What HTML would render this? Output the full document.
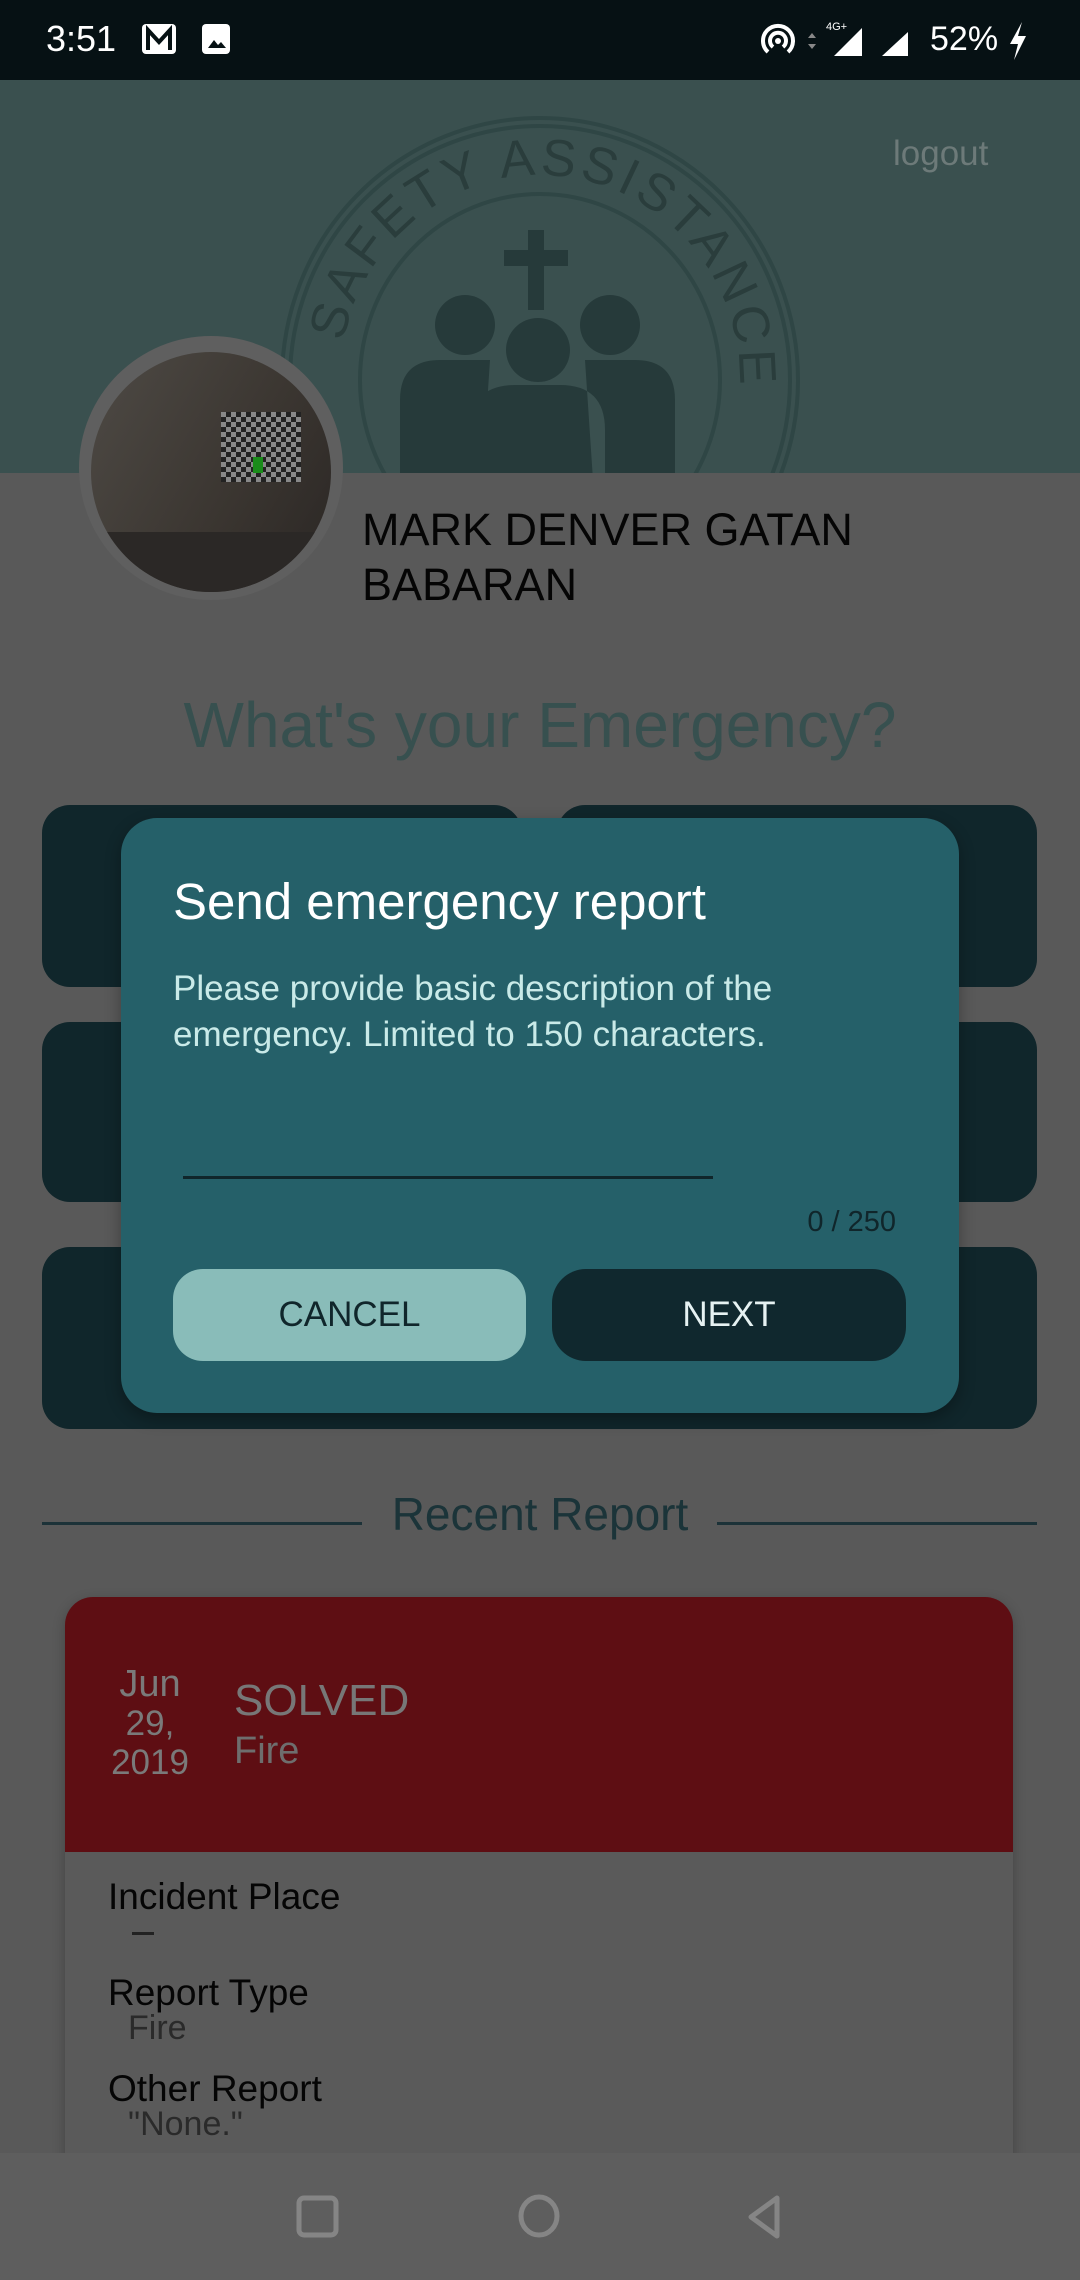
<!DOCTYPE html>
<html><head><meta charset="utf-8"><style>
*{margin:0;padding:0;box-sizing:border-box}
body{width:1080px;height:2280px;position:relative;overflow:hidden;background:#595959;font-family:"Liberation Sans",sans-serif}
.a{position:absolute;white-space:nowrap}
.card{position:absolute;background:#10262b;border-radius:28px}
</style></head><body>
<div class="a" style="left:0;top:0;width:1080px;height:80px;background:#061114"></div>
<div class="a" style="left:46px;top:18px;font-size:36px;color:#fff">3:51</div>
<svg class="a" style="left:140px;top:22px" width="40" height="36" viewBox="0 0 40 36"><rect x="2" y="2" width="34" height="30" rx="4" fill="#fff"/><path d="M8 28V8l11 12 11-12v20" stroke="#061114" stroke-width="4" fill="none"/></svg>
<svg class="a" style="left:200px;top:22px" width="34" height="34" viewBox="0 0 34 34"><rect x="2" y="2" width="28" height="30" rx="4" fill="#fff"/><path d="M8 26l6-8 4 5 3-3 5 6z" fill="#061114"/></svg>
<svg class="a" style="left:758px;top:20px" width="200" height="42" viewBox="0 0 200 42"><path d="M10 32a15 15 0 1 1 20 0" stroke="#fff" stroke-width="4" fill="none"/><path d="M15 27a8 8 0 1 1 10 0" stroke="#fff" stroke-width="4" fill="none"/><circle cx="20" cy="21" r="3" fill="#fff"/><path d="M50 18l4-5 4 5zM50 24l4 5 4-5z" fill="#888"/><path d="M104 36V8L76 36z" fill="#fff"/><text x="68" y="10" font-size="11" fill="#fff" font-family="Liberation Sans">4G+</text><path d="M150 36V12L124 36z" fill="#fff"/></svg>
<div class="a" style="left:930px;top:20px;font-size:34px;color:#fff">52%</div>
<svg class="a" style="left:1006px;top:20px" width="24" height="42" viewBox="0 0 24 42"><path d="M16 2L4 24h8l-4 16 12-24h-8z" fill="#fff"/></svg>

<div class="a" style="left:0;top:80px;width:1080px;height:393px;background:#3a504f;overflow:hidden">
<svg class="a" style="left:270px;top:30px" width="540" height="540" viewBox="0 0 540 540"><defs><path id="arc" d="M70 270A200 205 0 0 1 470 270"/></defs><g fill="none" stroke="#2f4645" stroke-width="4"><ellipse cx="270" cy="270" rx="258" ry="262"/><ellipse cx="270" cy="270" rx="250" ry="254"/><ellipse cx="270" cy="270" rx="180" ry="186"/></g>
<text font-size="52" fill="#2a3d3c" font-family="Liberation Sans" letter-spacing="4"><textPath href="#arc" startOffset="6%">SAFETY ASSISTANCE</textPath></text>
<g fill="#263a3a"><rect x="258" y="120" width="16" height="80"/><rect x="234" y="140" width="64" height="16"/><circle cx="195" cy="215" r="30"/><circle cx="340" cy="215" r="30"/><circle cx="268" cy="240" r="32"/><path d="M130 400v-110q0-40 40-40h50l-10 150zM405 400v-110q0-40-40-40h-50l10 150zM200 420v-100q0-45 45-45h45q45 0 45 45v100z"/></g></svg>
<div class="a" style="left:893px;top:54px;font-size:35px;color:#6d7a79">logout</div>
</div>
<div class="a" style="left:79px;top:336px;width:264px;height:264px;border-radius:50%;background:#5f5f5f"></div>
<div class="a" style="left:91px;top:352px;width:240px;height:240px;border-radius:50%;background:linear-gradient(120deg,#4e4a45,#3a3530 60%,#2a2624);overflow:hidden">
<div class="a" style="left:130px;top:60px;width:80px;height:70px;background:repeating-conic-gradient(#222 0 25%,#888 0 50%) 0 0/10px 10px"></div>
<div class="a" style="left:162px;top:105px;width:10px;height:16px;background:#1a8c1a"></div>
<div class="a" style="left:0;top:180px;width:240px;height:60px;background:#2b2826"></div>
</div>
<div class="a" style="left:362px;top:502px;font-size:45px;line-height:55px;color:#050505">MARK DENVER GATAN<br>BABARAN</div>
<div class="a" style="left:0;width:1080px;top:688px;text-align:center;font-size:64px;color:#37504f">What's your Emergency?</div>

<div class="card" style="left:42px;top:805px;width:480px;height:182px"></div>
<div class="card" style="left:557px;top:805px;width:480px;height:182px"></div>
<div class="card" style="left:42px;top:1022px;width:480px;height:180px"></div>
<div class="card" style="left:557px;top:1022px;width:480px;height:180px"></div>
<div class="card" style="left:42px;top:1247px;width:995px;height:182px"></div>

<div class="a" style="left:121px;top:818px;width:838px;height:595px;background:#256069;border-radius:36px;box-shadow:0 6px 16px rgba(0,0,0,.3)"></div>
<div class="a" style="left:173px;top:872px;font-size:51px;color:#fff">Send emergency report</div>
<div class="a" style="left:173px;top:966px;font-size:35px;line-height:46px;color:#c9eae8">Please provide basic description of the<br>emergency. Limited to 150 characters.</div>
<div class="a" style="left:183px;top:1176px;width:530px;height:3px;background:#10262b"></div>
<div class="a" style="left:780px;width:116px;top:1206px;text-align:right;font-size:29px;color:#10262b">0 / 250</div>
<div class="a" style="left:173px;top:1269px;width:353px;height:92px;background:#89bcb9;border-radius:30px;text-align:center;line-height:92px;font-size:35px;color:#10262b">CANCEL</div>
<div class="a" style="left:552px;top:1269px;width:354px;height:92px;background:#10282e;border-radius:34px;text-align:center;line-height:92px;font-size:35px;color:#e6f2f2">NEXT</div>

<div class="a" style="left:42px;top:1522px;width:320px;height:3px;background:#1c3238"></div>
<div class="a" style="left:717px;top:1522px;width:320px;height:3px;background:#1c3238"></div>
<div class="a" style="left:0;width:1080px;top:1487px;text-align:center;font-size:46px;color:#1b3439">Recent Report</div>

<div class="a" style="left:65px;top:1597px;width:948px;height:600px;background:#5a5a5a;border-radius:28px 28px 0 0;box-shadow:0 4px 12px rgba(0,0,0,.25)"></div>
<div class="a" style="left:65px;top:1597px;width:948px;height:255px;background:#5e0e13;border-radius:28px 28px 0 0"></div>
<div class="a" style="left:95px;width:110px;top:1665px;text-align:center;font-size:38px;line-height:39px;color:#7a7a7a">Jun<br><span style="font-size:35px">29,<br>2019</span></div>
<div class="a" style="left:234px;top:1676px;font-size:44px;color:#777">SOLVED</div>
<div class="a" style="left:234px;top:1730px;font-size:38px;color:#6e6e6e">Fire</div>
<div class="a" style="left:108px;top:1876px;font-size:37px;color:#050505">Incident Place</div>
<div class="a" style="left:132px;top:1932px;width:22px;height:3px;background:#222"></div>
<div class="a" style="left:108px;top:1972px;font-size:37px;color:#050505">Report Type</div>
<div class="a" style="left:128px;top:2009px;font-size:34px;color:#2a2a2a">Fire</div>
<div class="a" style="left:108px;top:2068px;font-size:37px;color:#050505">Other Report</div>
<div class="a" style="left:128px;top:2105px;font-size:34px;color:#2a2a2a">"None."</div>

<div class="a" style="left:0;top:2153px;width:1080px;height:127px;background:#5e5e5e"></div>
<svg class="a" style="left:0;top:2153px" width="1080" height="127" viewBox="0 0 1080 127"><g fill="none" stroke="#858585" stroke-width="5"><rect x="299" y="45" width="37" height="37" rx="5"/><ellipse cx="539" cy="63" rx="18" ry="19"/><path d="M777 45v38l-26-19z" stroke-linejoin="round"/></g></svg>
</body></html>
